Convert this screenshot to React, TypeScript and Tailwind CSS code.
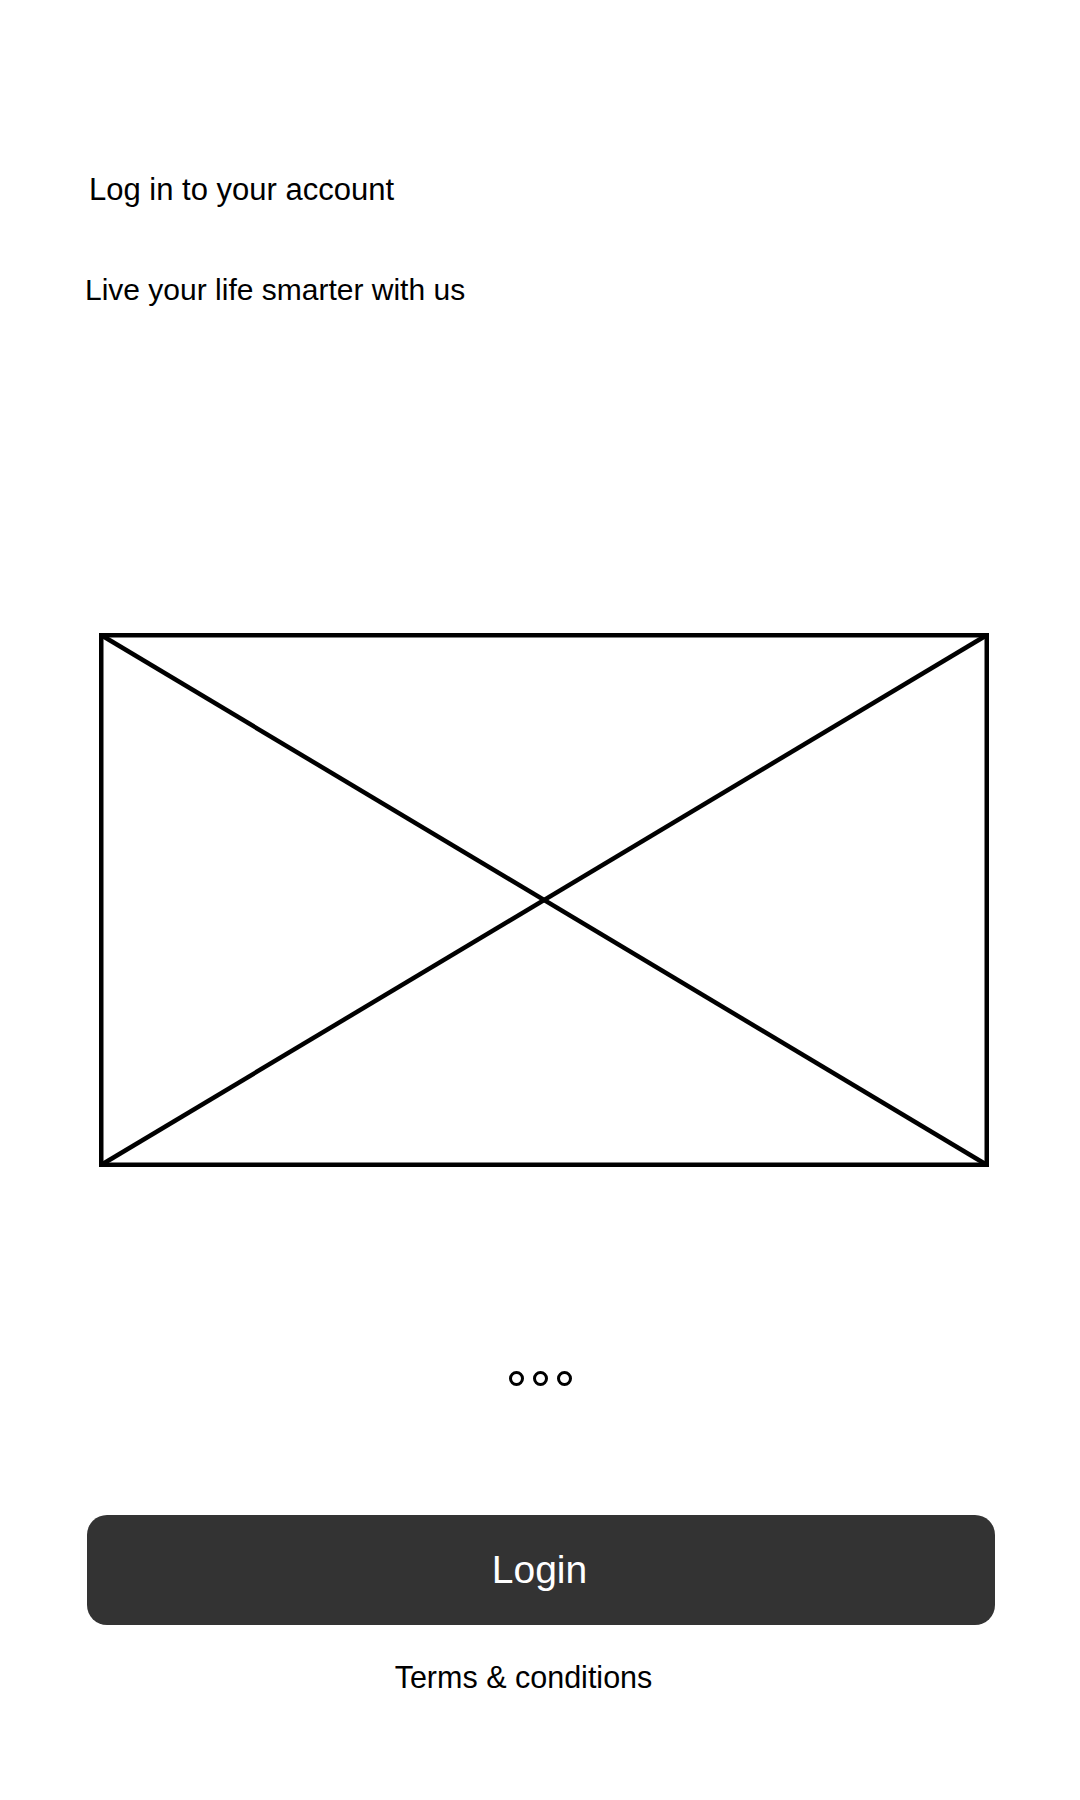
import React from "react";

export default function App() {
  return (
    <div
      className="min-h-[1800px] w-[1080px] bg-white text-black flex flex-col"
      style={{ fontFamily: '"Liberation Sans", Arial, sans-serif' }}
    >
      <div className="pt-[172px] pl-[89px] text-[31px] leading-[36px]">Log in to your account</div>
      <div className="mt-[64px] pl-[85px] text-[30px] leading-[36px]">Live your life smarter with us</div>

      <div className="mt-[325px] ml-[99px] w-[890px] h-[534px]">
        <svg width="890" height="534" viewBox="0 0 890 534" className="block">
          <rect x="2.25" y="2.25" width="885.5" height="529.5" fill="none" stroke="#000" strokeWidth="4.5" />
          <line x1="2" y1="2" x2="888" y2="532" stroke="#000" strokeWidth="4.5" />
          <line x1="888" y1="2" x2="2" y2="532" stroke="#000" strokeWidth="4.5" />
        </svg>
      </div>

      <div className="mt-[204px] flex justify-center gap-[9px] pl-[1px]">
        <div className="w-[15px] h-[15px] rounded-full border-[3px] border-black" />
        <div className="w-[15px] h-[15px] rounded-full border-[3px] border-black" />
        <div className="w-[15px] h-[15px] rounded-full border-[3px] border-black" />
      </div>

      <div className="mt-[129px] ml-[87px] w-[908px] h-[110px] rounded-[20px] bg-[#333333] flex items-center justify-center">
        <span className="text-white text-[39px] pr-[3px]">Login</span>
      </div>

      <div className="mt-[34px] flex justify-center pr-[33px] text-[30.5px] leading-[36px]">Terms &amp; conditions</div>
    </div>
  );
}
